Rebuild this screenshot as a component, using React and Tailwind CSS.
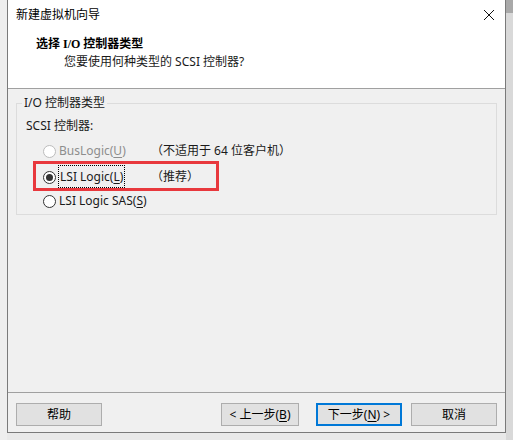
import React from 'react';

const font = { fontFamily: '"Noto Sans", "Noto Sans CJK SC", "Microsoft YaHei", sans-serif' };

const Radio = ({ checked, disabled }) => (
    <span
        className={`flex h-[13px] w-[13px] shrink-0 items-center justify-center rounded-full border bg-white ${
            disabled ? 'border-[#bcbcbc] bg-[#f3f3f3]' : 'border-[#333333]'
        }`}
    >
        {checked && <span className="h-[7px] w-[7px] rounded-full bg-[#333333]" />}
    </span>
);

const Key = ({ children }) => <span className="underline underline-offset-2">{children}</span>;

const Button = ({ children, primary, className = '' }) => (
    <button
        className={`flex h-[23px] items-center justify-center bg-[#e1e1e1] text-[12px] text-black ${
            primary ? 'border-2 border-[#0078d7]' : 'border border-[#adadad]'
        } ${className}`}
    >
        {children}
    </button>
);

const App = () => {
    return (
        <div className="flex h-[440px] w-[513px] bg-[#e9e9e9] leading-none" style={font}>
            <div className="w-[7px] shrink-0 bg-[#eeeeee]" />

            <div className="flex h-[433px] w-[499px] shrink-0 flex-col border-x border-b border-[#7a7a7a] bg-[#f0f0f0]">
                {/* title bar */}
                <div className="flex h-[30px] items-center justify-between bg-white pl-[8px] pr-[9px]">
                    <span className="text-[12px] text-black">新建虚拟机向导</span>
                    <svg width="12" height="12" viewBox="0 0 12 12" className="mr-[1px]">
                        <path d="M1 1 L11 11 M11 1 L1 11" stroke="#111" strokeWidth="1" />
                    </svg>
                </div>

                {/* header */}
                <div className="flex h-[58px] flex-col bg-white pl-[28px] pt-[8px]">
                    <span className="text-[12px] font-bold text-black" style={{ fontFamily: '"Liberation Serif", "Noto Sans CJK SC", serif' }}>
                        选择 I/O 控制器类型
                    </span>
                    <span className="mt-[6px] pl-[28px] text-[12px] text-[#1a1a1a]">您要使用何种类型的 SCSI 控制器?</span>
                </div>
                <div className="h-px bg-[#a0a0a0]" />

                {/* body */}
                <div className="relative flex-1 pt-[6px]">
                    <fieldset className="mx-[8px] border border-[#dcdcdc] pb-[3px] pl-[5px]">
                        <legend className="px-[2px] text-[12px] leading-[16px] text-[#1a1a1a]">I/O 控制器类型</legend>
                        <div className="mt-[7px] pl-[4px] text-[12px] leading-[16px] text-[#1a1a1a]">SCSI 控制器:</div>

                        <div className="mt-[7px] flex h-[20px] items-center pl-[21px] text-[12px]">
                            <Radio disabled />
                            <span className="ml-[3px] w-[92px] text-[#8d8d8d]">
                                BusLogic(<Key>U</Key>)
                            </span>
                            <span className="text-[#1a1a1a]">（不适用于 64 位客户机）</span>
                        </div>

                        <div className="mt-[6px] flex h-[20px] items-center pl-[21px] text-[12px]">
                            <Radio checked />
                            <span className="ml-[3px] w-[92px]">
                                <span className="px-[1px] py-[2px] text-[#1a1a1a] outline-1 outline-dotted outline-black">
                                    LSI Logic(<Key>L</Key>)
                                </span>
                            </span>
                            <span className="text-[#1a1a1a]">（推荐）</span>
                        </div>

                        <div className="mt-[4px] flex h-[20px] items-center pl-[21px] text-[12px]">
                            <Radio />
                            <span className="ml-[3px] text-[#1a1a1a]">
                                LSI Logic SAS(<Key>S</Key>)
                            </span>
                        </div>
                    </fieldset>

                    {/* annotation */}
                    <div className="absolute left-[25px] top-[72px] h-[30px] w-[186px] border-[3px] border-[#e8383d]" />
                </div>

                {/* footer */}
                <div className="h-px bg-[#a0a0a0]" />
                <div className="flex h-[39px] items-start pl-[8px] pr-[8px] pt-[10px]">
                    <Button className="w-[86px]">帮助</Button>
                    <div className="flex-1" />
                    <Button className="w-[78px]">
                        &lt; 上一步(<Key>B</Key>)
                    </Button>
                    <Button primary className="ml-[17px] w-[86px]">
                        下一步(<Key>N</Key>) &gt;
                    </Button>
                    <Button className="ml-[9px] w-[86px]">取消</Button>
                </div>
            </div>

            <div className="flex w-[7px] shrink-0 flex-col">
                <div className="h-[13px] bg-[#a9a9a9]" />
                <div className="flex-1 bg-[#d9d9d9]" />
            </div>
        </div>
    );
};

export default App;
